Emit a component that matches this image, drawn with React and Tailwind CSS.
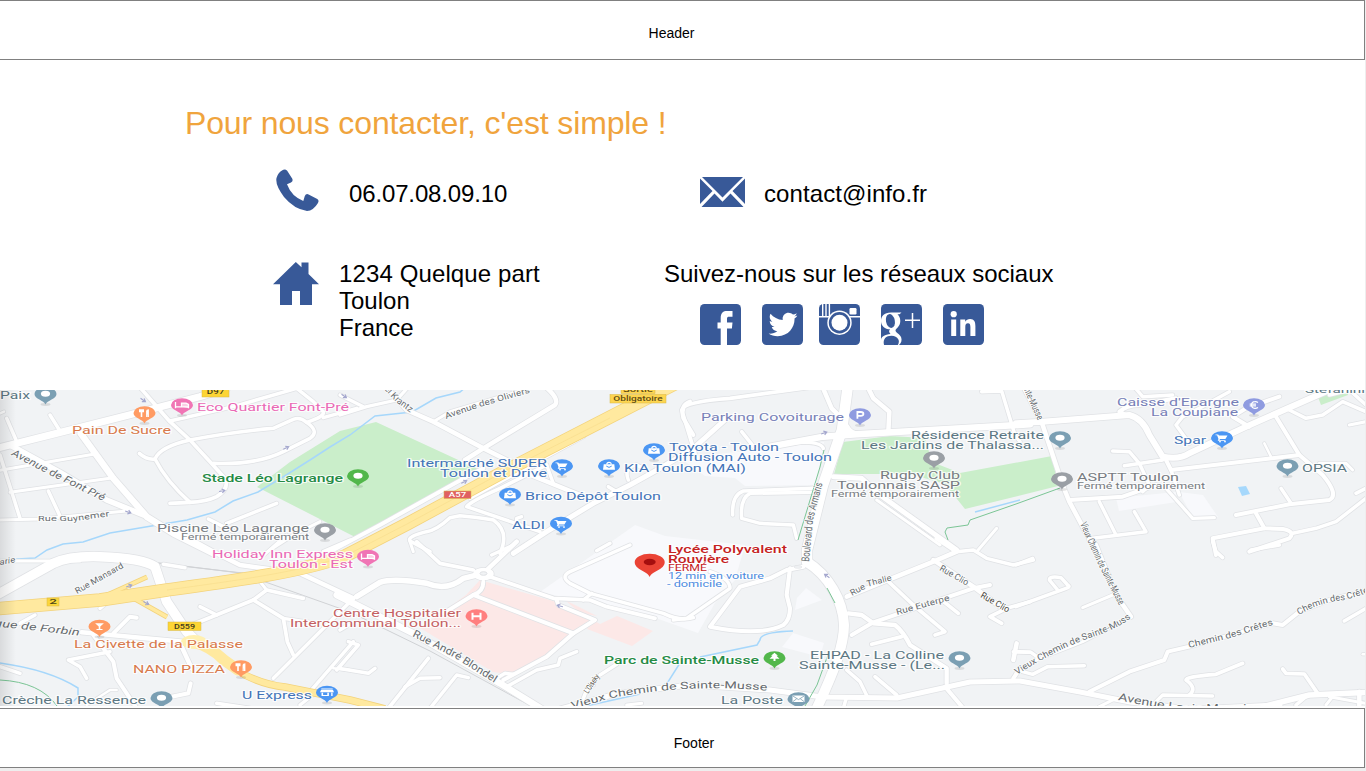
import React from "react";
import { FaTwitter } from "react-icons/fa";

const BLUE = "#385998";

/* Street geometry, grouped by map tile. Tile units are a third of a pixel; each street is [width in px, path]. */
const tiles = [
  { x: 0, y: 385, streets: [
    [6.5, "M-10 190L150 150L380 92L600 35L680 10"],
    [3, "M20 100L48 165"], [2, "M0 85L12 80"], [3, "M150 90L180 138"],
    [5, "M30 180L180 262L320 345L430 390"],
    [6, "M242 145L340 280L440 395L520 445L640 505"],
    [2.5, "M0 256L280 208"], [2.5, "M30 322L340 278"], [3, "M0 210L60 400"], [3, "M145 318L183 400"], [2.5, "M0 405L120 402L380 378"],
    [3.2, "M405 -10L510 110L570 165L630 230L675 280Q690 310 650 335Q620 350 570 352L510 355"],
    [3, "M418 205Q440 225 465 222Q500 290 570 352"],
    [3, "M465 222Q480 185 570 165Q700 140 820 130L880 103Q900 95 920 112Q960 140 930 160L850 200Q770 240 640 235"],
    [3, "M510 108L700 65L890 10"], [3, "M920 112Q975 95 970 80L940 50L890 10"], [3, "M970 98L1070 70"],
    [3, "M625 402L700 440"], [3, "M680 415L830 355"], [2.5, "M810 495L880 450L960 410"], [3, "M970 500L1050 465"],
  ]},
  { x: 340, y: 385, streets: [
    [4, "M135 0L200 75L280 110L430 190L500 225L560 265L720 330"],
    [2.5, "M280 110L330 80L600 0"], [4, "M610 0Q660 40 645 60L430 190L375 225"],
    [3.5, "M-30 500L120 420L380 275L430 250"], [2.8, "M0 90L80 65L170 45L210 0"], [2.8, "M0 30L70 65"],
    [3, "M730 155L500 280L390 340"], [3, "M600 440L380 365Q390 350 480 310L620 240"], [2.8, "M620 240L640 295"],
    [3, "M480 505Q510 440 460 405Q400 395 360 392L330 398Q290 435 260 440Q200 455 210 468L270 500"],
    [4.5, "M520 505L620 440L760 355L870 300L960 250L1060 190L1160 100"],
    [3, "M865 285Q850 245 890 240L910 250"], [3, "M805 305L830 320"], [3.5, "M1050 50Q1020 60 1030 100L1060 150"],
    [2.8, "M530 410L530 400L545 395"], [3, "M770 497L810 475"], [2.5, "M210 470L220 500"],
  ]},
  { x: 680, y: 385, streets: [
    [3.2, "M45 205L5 75Q10 50 150 40L440 0"], [3, "M185 140L225 190"], [4, "M425 0L455 70L480 95"],
    [4, "M560 0L580 40L628 80L625 140"], [3, "M905 20L965 18L1005 150L1020 170"],
    [6, "M270 185L430 155L530 148L1050 118"],
    [3, "M158 390Q155 330 190 318L400 310"], [3, "M400 322L210 325Q180 340 185 400L240 415L340 420L350 460"],
    [4.5, "M460 275L545 280L600 330L830 495"], [2.5, "M590 345L780 480"],
    [5, "M500 125Q510 148 540 148"], [3, "M280 180Q420 160 430 190"], [2.5, "M890 500L950 430"],
  ]},
  { x: 1016, y: 385, streets: [
    [5.5, "M0 115L80 110L340 90Q380 100 400 150L440 215Q490 225 520 205L690 125L940 15"],
    [4, "M20 0L80 120L140 300L160 350L240 500"],
    [3, "M290 198L340 200L370 235L400 300L380 320"], [3, "M325 242L440 225"], [3.5, "M445 215L465 255L850 210"],
    [3.5, "M330 90L310 80Q330 62 370 60L480 40"], [3, "M520 175L480 120L500 95L550 70L640 20"],
    [3.5, "M700 125L650 95L690 70L790 35"], [3.5, "M780 95L850 210L920 270Q970 330 940 345L820 358L660 390"],
    [2, "M745 175L765 215"], [3, "M820 75L870 100L920 90L980 50L1050 80"], [3, "M940 30L1000 15L1050 60"],
    [2.5, "M1000 120L1050 110"], [3, "M795 310L825 355"], [3.5, "M720 385L745 430L800 432Q840 440 820 460L700 500"],
    [3.5, "M745 430L590 460L600 510"], [3, "M830 445L900 430L960 410L1050 340"],
    [3.5, "M160 345L320 335L420 300"], [3, "M250 350L300 450"], [3, "M355 380L390 440L230 460"],
    [2.8, "M450 310L530 400L595 398"], [3, "M350 0L380 35L470 30"], [3, "M1020 325L1050 310"], [2.5, "M910 235L990 235L1010 255"], [3, "M465 255L490 330"],
  ]},
  { x: 0, y: 545, streets: [
    [9, "M-10 150L160 55Q210 32 300 35Q430 40 465 65L500 170L560 260L590 290"],
    [4, "M530 -40L640 20L720 60L900 85L1060 160"], [2.5, "M0 48L240 48"], [2.5, "M780 40L860 -30"], [3, "M490 58L555 68"],
    [3, "M600 185L650 210"], [3.2, "M575 240L760 165L800 135L910 160"], [2.5, "M780 110L800 135"],
    [3.2, "M760 165L850 220L862 290L880 330"], [2.8, "M850 220L950 235"], [3, "M820 400L1050 170"], [3, "M930 440L1060 290"],
    [3.5, "M340 265L390 215L410 218"], [4, "M245 262L550 290"], [3.5, "M280 270L340 350L350 400L410 490"],
    [3, "M330 320L205 345L240 365L260 400"], [4, "M545 305L575 370"], [3.5, "M515 455L565 445L572 415"],
    [3, "M0 365L60 385"], [3, "M60 235L105 210"], [2, "M350 435L330 435L260 480"], [2.8, "M900 480L950 440"], [3, "M300 190L330 165"], [3, "M650 475L750 490"],
    [2, "M1000 370L1050 375"],
  ]},
  { x: 340, y: 545, streets: [
    [5, "M50 155L120 112Q160 98 260 115Q320 140 370 100L430 85"], [3.2, "M230 -10L300 55L400 75"],
    [4, "M430 85L530 -10"], [3.2, "M450 95L640 160L750 165L800 185L945 220"],
    [3.5, "M430 110Q430 140 400 150L700 265"], [3.5, "M400 150L310 205"],
    [3.5, "M650 165L655 180L765 225L700 265L620 335L490 405"], [3, "M500 425L590 375L655 360L660 340L710 320"],
    [3, "M470 400L495 385L520 388"], [3, "M1060 218Q1020 230 970 205L750 145L690 115Q660 95 690 80L870 0"],
    [3, "M730 165L755 145"], [3, "M830 358L780 390"], [3, "M730 460L740 435L760 420"],
    [6, "M-10 150L220 265L480 415L610 495"], [3, "M25 290L55 300L-10 375"], [3, "M-5 370L85 385L105 370"],
    [3.2, "M265 340L145 490"], [3, "M300 398L240 400L195 425"], [3, "M385 398L350 390L270 490"], [2.8, "M455 30L520 0"],
    [3, "M0 255L25 240"], [2.5, "M860 480L905 475"],
  ]},
  { x: 680, y: 545, streets: [
    [4, "M500 155L760 50L830 20L770 -20"], [3, "M830 20L880 15L920 40L1000 60L1060 45"],
    [4, "M760 45L880 125L960 185"], [3.5, "M930 120L880 130L580 232L515 270"],
    [3.8, "M505 205L545 210L580 235L645 240Q670 260 690 300L800 370L800 415"],
    [3.2, "M615 100L700 180L795 260L765 270"], [3.2, "M785 165L835 205"], [3.2, "M575 298L665 275"],
    [3.2, "M1050 170L980 190L930 215L965 235"],
    [3.6, "M370 65L320 75L270 100L180 125L90 245Q240 275 310 240Q330 225 330 190L320 150L330 70"],
    [3, "M500 375L540 410L562 455"], [3.2, "M585 395L650 450"], [3.5, "M795 425L850 490"], [4, "M1010 295L1000 345"], [3, "M1000 320L1050 322"],
    [3, "M500 455L490 490"], [3, "M-20 225L20 220L150 130Q150 100 90 80"], [3.5, "M1000 400L1020 370"],
  ]},
  { x: 1016, y: 545, streets: [
    [3, "M0 185L150 130Q165 125 155 120L135 98Q100 92 100 105L125 135"], [3, "M0 60L50 40"], [2.5, "M200 188L290 150"],
    [3, "M590 -10L600 20L620 38"], [3, "M705 15L790 0"],
    [3.5, "M220 440L340 380L445 345L455 320L520 305L770 235L800 240L850 200L940 165L1060 135"],
    [3, "M20 380L50 388L95 365L205 362"], [3, "M0 320L45 322L70 340"], [2.8, "M420 470L440 450L590 453"],
    [3.2, "M520 450Q545 430 510 405Q510 395 600 388L680 355"], [3.2, "M800 372L810 385L865 387L905 445"],
    [5, "M720 490L880 450L1060 442"], [3, "M985 228L1050 190"], [4, "M1030 440L1030 485"], [2.5, "M250 485L300 460"],
    [3, "M840 480L870 455"], [2.5, "M940 455L1050 475"], [2.5, "M930 480L950 455"], [2, "M1040 328L1050 328"],
    [4, "M240 0L300 150L345 215"], [2.5, "M345 215L200 290L60 345L0 385"],
  ]},
];

/* Arterial roads in page pixels. */
const arterials = [
  [10, "M848 385L842 430L823 485L807 550L807 562"],
  [9.5, "M807 562C828 575 843 600 844 625C844 645 835 670 815 712"],
  [4.5, "M560 709L620 693L690 685L770 690L823 697L897 698L970 682L1020 681L1080 692L1130 702L1190 709L1280 705"],
];

const rivers = [
  "M480 375L460 392L436 398L412 412L375 416L350 435L330 447L310 460L283 477L258 492L233 501L215 512L187 520L110 533L83 542L63 544L47 550L35 558L0 560",
  "M0 663Q50 670 78 688L78 697L66 708", "M680 663L668 682L656 690", "M793 631Q760 632 760 640L757 645L700 657", "M975 512L1020 500", "M586 706L640 694",
];
const trails = ["M0 680Q40 682 57 706", "M1060 488L1016 504L970 520L968 525L947 528L945 532L948 540", "M824 450L820 467L798 540", "M827 588L835 603", "M829 652L817 685L805 706"];

const C = { orange: "#d8794b", blue: "#4374b8", gray: "#777b81", teal: "#5c7783", pink: "#ea68b5", green: "#258b45", violet: "#7780b8", red: "#c5221f", hosp: "#c46062", sky: "#4b8be0" };

/* [text, left, baseline, width, colour, size, weight] */
const places = [
  ["Paix", 0, 399, 30, C.teal, 10.2], ["Pain De Sucre", 72, 434, 99, C.orange, 10.2],
  ["Eco Quartier Font-Pré", 197, 411, 152, C.pink, 10.2], ["Stade Léo Lagrange", 202, 482, 141, C.green, 10.2, 500],
  ["Piscine Léo Lagrange", 157, 531.5, 152, C.gray, 10.2], ["Fermé temporairement", 181, 539.5, 128, C.gray, 8.2],
  ["Holiday Inn Express", 212, 557.5, 141, C.pink, 10.2], ["Toulon - Est", 269, 567.5, 84, C.pink, 10.2],
  ["Intermarché SUPER", 407, 467, 140, C.blue, 10.2], ["Toulon et Drive", 440, 476.5, 107, C.blue, 10.2],
  ["Brico Dépôt Toulon", 525, 500, 136, C.blue, 10.2], ["ALDI", 512, 529, 33, C.blue, 10.2],
  ["Toyota - Toulon", 669, 451, 110, C.blue, 10.2], ["Diffusion Auto - Toulon", 668, 460.5, 164, C.blue, 10.2],
  ["KIA Toulon (MAI)", 624, 472, 122, C.blue, 10.2], ["Parking Covoiturage", 701, 421, 143, C.violet, 10.2],
  ["Résidence Retraite", 911, 439, 133, C.teal, 10.2], ["Les Jardins de Thalassa...", 861, 448.5, 183, C.teal, 10.2],
  ["Rugby Club", 880, 479, 80, C.gray, 10.2], ["Toulonnais SASP", 837, 488.5, 123, C.gray, 10.2],
  ["Fermé temporairement", 831, 496.5, 128, C.gray, 8.2], ["Caisse d'Epargne", 1117, 406, 122, C.violet, 10.2],
  ["La Coupiane", 1151, 415.5, 87, C.violet, 10.2], ["Spar", 1174, 444, 32, C.blue, 10.2],
  ["OPSIA", 1302, 471.5, 45, C.teal, 10.2], ["ASPTT Toulon", 1077, 481, 102, C.gray, 10.2],
  ["Fermé temporairement", 1077, 488.5, 128, C.gray, 8.2], ["Stefanini", 1305, 392.5, 60, C.teal, 9],
  ["Lycée Polyvalent", 668, 552.5, 119, C.red, 10.2, 500], ["Rouvière", 668, 562.5, 61, C.red, 10.2, 500],
  ["FERMÉ", 668, 570.5, 39, C.red, 8.2], ["12 min en voiture", 668, 578.5, 96, C.sky, 8.5], ["- domicile", 667, 586.5, 55, C.sky, 8.5],
  ["Centre Hospitalier", 333, 616.5, 128, C.hosp, 10.2], ["Intercommunal Toulon...", 290, 626.5, 171, C.hosp, 10.2],
  ["La Civette de la Palasse", 74, 647.5, 169, C.orange, 10.2], ["NANO PIZZA", 133, 673, 92, C.orange, 10.2],
  ["U Express", 242, 698.5, 70, C.blue, 10.2], ["Crèche La Ressence", 2, 703.5, 144, C.teal, 10.2],
  ["Parc de Sainte-Musse", 604, 663.5, 155, C.green, 10.2, 500], ["La Poste", 721, 704, 62, C.teal, 10.2],
  ["EHPAD - La Colline", 810, 658.5, 134, C.teal, 10.2], ["Sainte-Musse -  (Le...", 799, 668.5, 146, C.teal, 10.2],
];

/* [text, path, size, slanted, colour] */
const streetNames = [
  ["Avenue de Font Pré", "M11 455L50 475L105 502", 10, true], ["Rue Guynemer", "M38 521L75 521L111 516", 8],
  ["Rue Mansard", "M77 594L100 581L125 567", 8.5], ["el Krantz", "M384 389L396 402L411 413", 9],
  ["Avenue des Oliviers", "M446 419L480 407L532 392", 8.5], ["arie", "M0 565L16 562", 8, true],
  ["que de Forbin", "M-6 626L30 630L81 636", 10, true], ["Rue André Blondel", "M412 636L455 658L496 684", 10.5],
  ["Vieux Chemin de Sainte-Musse", "M572 709L612 698Q690 683 770 691", 10],
  ["L'Oiseky", "M588 694L600 676", 8, false, "#4c4840"], ["Boulevard des Armaris", "M809 562L813 520L823 482", 11],
  ["Rue Thalie", "M852 596L870 586L893 580", 8.5], ["Rue Euterpe", "M897 615L951 600", 8.5],
  ["Rue Clio", "M939 570L967 586", 9], ["Rue Clio", "M980 597L1008 613", 9, false, "#4c4840"],
  ["nte-Musse", "M1024 390L1038 421", 9.5], ["Vieux Chemin de Sainte-Musse", "M1080 524L1097 562L1120 607", 10],
  ["Vieux Chemin de Sainte-Muss", "M1017 675Q1055 650 1090 638Q1120 628 1132 617", 9],
  ["Chemin des Crêtes", "M1189 648L1230 638L1275 624", 9], ["Chemin des Crêtes", "M1299 615Q1320 602 1345 600L1374 591", 9],
  ["Avenue Louis Monnier", "M1118 700Q1145 706 1190 712L1262 712", 10.5],
];

const pins = [
  [45.5, 394, "#7b9fb3", "dot"], [144.5, 413, "#ff9b63", "food"], [182, 405, "#f075b5", "bed"], [358, 476, "#52b74b", "dot"],
  [325, 530, "#9a9fa5", "dot"], [368, 556.5, "#f075b5", "bed"], [562, 466, "#4b96f3", "cart"], [609, 466, "#4b96f3", "bag"],
  [510, 494.5, "#4b96f3", "bag"], [561, 523.5, "#4b96f3", "cart"], [654, 450, "#4b96f3", "bag"], [860, 415, "#8f9be0", "P"],
  [934, 458, "#9a9fa5", "dot"], [1060, 438, "#7b9fb3", "dot"], [1062, 479, "#9a9fa5", "dot"], [1254, 405, "#8f9be0", "€"],
  [1222, 438, "#4b96f3", "cart"], [1287.5, 466, "#7b9fb3", "dot"], [99.5, 626.5, "#ff9b63", "drink"], [241, 667, "#ff9b63", "food"],
  [327, 692.5, "#4b96f3", "shop"], [161.5, 698, "#7b9fb3", "dot"], [476.5, 616, "#ff7f7f", "H"], [774.5, 658, "#52b74b", "tree"],
  [959.5, 658, "#7b9fb3", "dot"], [798.5, 699, "#7b9fb3", "mail"],
];

const shields = [
  ["D97", 202, 387, 27, 10, "#fdd534", "#3d3a20"], ["Obligatoire", 610, 394.5, 56, 8.5, "#fdd550", "#5d4c14"], ["Sortie", 621, 386, 34, 7.5, "#fdd550", "#5d4c14"],
  ["A57", 444, 491, 27, 7.5, "#e06062", "#fff"], ["2", 47, 598, 12, 8, "#fbd63b", "#4a4317"], ["D559", 168, 622, 33, 8.5, "#fdd534", "#3d3a20"],
];

const arrows = [[143, 400, 35], [286, 448, -25], [222, 491, -10], [128, 512, 20], [344, 396, 35], [824, 433, -20], [464, 482, -25], [560, 606, 195], [827, 576, 215], [129, 586, -20], [146, 603, 30]];

function Glyph({ kind }) {
  switch (kind) {
    case "dot": return <ellipse cx="0" cy="-.3" rx="4.6" ry="3" fill="#fff" />;
    case "food": return <path d="M-5.5-3.7h5v3h-1.7v4.6h-1.6v-4.6h-1.7zM1.6 3.9v-6q0-1.6 2.8-1.6v7.6H3v-2.4H2.8v2.4z" fill="#fff" />;
    case "bed": return <path d="M-6.5-3v6.2M-6.5 1.8H6.5M6.5 3.2V-.5L4-1.9H-.5V1.6" fill="#fff" fillOpacity=".65" stroke="#fff" strokeWidth="1.3" />;
    case "cart": return <g fill="#fff"><path d="M-6.5-3.6h2.7l.8 1.2h8.5L3.4 1.1h-5.3l-.7.8h6v.9h-7.7l.8-1.9-1.4-3.6h-1.6z" /><circle cx="-2" cy="3.6" r=".9" /><circle cx="3" cy="3.6" r=".9" /></g>;
    case "bag": return <g><path d="M-2.2-1.5q0-2.2 2.2-2.2t2.2 2.2" fill="none" stroke="#fff" strokeWidth="1.2" /><path d="M-5.3-1.8H5.3L6 3.8H-6z" fill="#fff" /><path d="M-2.7.1q2.7 2.6 5.4 0" fill="none" stroke="#4b96f3" strokeWidth="1" /></g>;
    case "shop": return <g fill="#fff"><path d="M-5.7-4h11.4v1h-11.4zM-6-2.5H6L7-.2H-7zM-5.5.2h1.6v2.2h4.2V.2h1.6v3.3h-7.4z" /><path d="M4.2 0h1.4v3.6H4.2z" /></g>;
    case "drink": return <path d="M-4.4-3.2H4.4L.8 0v2.6H3v.9H-3v-.9h2.2V0z" fill="#fff" />;
    case "tree": return <path d="M0-5.3 3.5-2.2H2L5 .8H1V3H-1V.8H-5L-2-2.2H-3.5z" fill="#fff" />;
    case "mail": return <g><path d="M-6-3.5H6V3H-6z" fill="#fff" /><path d="M-5.6-3 0 .6 5.6-3M-5.6 2.6-1.8-.2M5.6 2.6 1.8-.2" fill="none" stroke="#7b9fb3" strokeWidth=".8" /></g>;
    case "H": return <path d="M-4-3.2V3.7M4-3.2V3.7M-4 .2H4" stroke="#fff" strokeWidth="2" />;
    case "P": return <path d="M-2.6 3.7V-3H.8Q3.4-3 3.4-1.1T.8.8H-2.6" fill="none" stroke="#fff" strokeWidth="1.8" />;
    default: return <path d="M4-2.4Q2.5-3.5.8-3.3Q-2.5-3-2.5 0T.8 3.3Q2.5 3.4 4 2.4M-4.3-.8H2M-4.3.9H2" fill="none" stroke="#fff" strokeWidth="1.2" />;
  }
}

function Streets({ casing }) {
  const extra = casing ? 2 : 0.5;
  const color = casing ? "#e0e2e5" : "#ffffff";
  return (
    <g fill="none" stroke={color} strokeLinecap="round" strokeLinejoin="round">
      {tiles.map((t, i) => (
        <g key={i} transform={`translate(${t.x} ${t.y}) scale(0.33333)`}>
          {t.streets.map(([w, d], j) => <path key={j} d={d} strokeWidth={(w + extra) * 3} />)}
        </g>
      ))}
      {arterials.map(([w, d], i) => <path key={i} d={d} strokeWidth={w + extra} />)}
      <ellipse cx="483.5" cy="574" rx="9" ry="5" fill={color} strokeWidth={2 + extra} />
    </g>
  );
}

function pathLength(d) {
  const n = d.match(/-?[\d.]+/g).map(Number);
  let total = 0;
  for (let i = 2; i < n.length; i += 2) total += Math.hypot(n[i] - n[i - 2], n[i + 1] - n[i - 1]);
  return total;
}

function CityMap() {
  return (
    <svg className="block h-[316px] w-full font-['Roboto',sans-serif]" viewBox="0 390 1365 316" preserveAspectRatio="none">
      <defs>
        <linearGradient id="edge"><stop stopColor="#000" stopOpacity=".1" /><stop offset="1" stopColor="#000" stopOpacity="0" /></linearGradient>
      </defs>
      <rect x="0" y="390" width="1365" height="316" fill="#f1f3f5" />
      <g fill="#f8f9fc">
        <path d="M680 458L773 448L824 442L816 485L745 486L735 478L705 476Z" />
        <path d="M635 525L665 536L745 545L735 580L715 603L698 633L650 616L540 592Z" />
        <path d="M1116 498L1176 492L1176 502L1119 511ZM1179 492L1203 495L1218 517L1193 518Z" />
        <path d="M806 588L822 600L795 610L797 598ZM793 633L824 643L820 657L782 647Z" />
      </g>
      <g fill="#caeeca">
        <path d="M376 422L480 470L357 538L310 514L257 487L290 462L340 431Z" />
        <path d="M843 442L890 436L925 438L932 462L960 473L1052 456L1058 486L965 509L945 484L910 474L834 474Z" />
        <path d="M1318 397L1346 389L1348 395L1321 405Z" />
      </g>
      <path d="M480 580L560 603L595 620L572 635L548 658L515 675L493 672L420 628L466 595ZM593 620L600 624L617 616L653 631L632 646L587 629Z" fill="#fce8e7" />
      <path d="M500 676L510 677L504 683ZM565 600L597 616L580 613Z" fill="#fce8e7" />
      <path d="M1238 487L1246 486L1250 494L1242 496Z" fill="#a6d8fc" />
      <g fill="none" stroke="#a6d7fb" strokeWidth="1.5">{rivers.map((d, i) => <path key={i} d={d} />)}</g>
      <path d="M80 553L240 573L350 612L430 651L540 711M110 558L243 573" fill="none" stroke="#d0d2d5" strokeWidth="1" />
      <Streets casing />
      <Streets />
      <g fill="none" strokeLinejoin="round">
        <g stroke="#f3d37c">
          <path d="M690 376L507 470L407 524L345 556C300 572 240 580 167 590L100 600L-5 609" strokeWidth="13.5" />
          <path d="M105 596L147 577M135 599L167 617" strokeWidth="5" />
          <path d="M212 650L245 675Q265 685 285 687L350 700L385 709" strokeWidth="7.5" />
        </g>
        <g stroke="#ffe99f">
          <path d="M690 376L507 470L407 524L345 556C300 572 240 580 167 590L100 600L-5 609" strokeWidth="12" />
          <path d="M105 596L147 577M135 599L167 617" strokeWidth="3.5" />
          <path d="M212 650L245 675Q265 685 285 687L350 700L385 709" strokeWidth="6" />
          <path d="M192 642Q210 646 224 660L238 670" strokeWidth="11" strokeLinecap="round" />
        </g>
        <path d="M610 418L507 470L407 524L345 556C300 572 240 580 167 590" stroke="#f6dc8c" strokeWidth=".6" />
      </g>
      <ellipse cx="194" cy="642" rx="13" ry="7" fill="#fff0b0" />
      <ellipse cx="483.5" cy="573.5" rx="3.5" ry="1.8" fill="#f1f3f5" stroke="#dfe1e4" />
      <ellipse cx="798" cy="567" rx="4" ry="1.3" fill="#f1f3f5" stroke="#dfe1e4" strokeWidth=".6" />
      <g fill="none" stroke="#7bc595" strokeWidth="1">{trails.map((d, i) => <path key={i} d={d} />)}</g>
      <g fill="none" stroke="#a4a7ce" strokeWidth="1.1">
        {arrows.map(([x, y, r], i) => <path key={i} transform={`translate(${x} ${y}) rotate(${r})`} d="M-3 0H3M0-2L3 0L0 2" />)}
      </g>
      <g stroke="#fbfcfc" strokeWidth="2" strokeOpacity=".85" paintOrder="stroke" strokeLinejoin="round">
        {streetNames.map(([text, d, size, slanted, color], i) => (
          <g key={i}>
            <path id={`street-${i}`} d={d} fill="none" stroke="none" />
            <text fontSize={size} fill={color || "#666b6f"} fontStyle={slanted ? "italic" : "normal"}>
              <textPath href={`#street-${i}`} textLength={pathLength(d) * 0.98} lengthAdjust="spacingAndGlyphs">{text}</textPath>
            </text>
          </g>
        ))}
      </g>
      {shields.map(([text, x, y, w, h, bg, fg], i) => (
        <g key={i}>
          <rect x={x} y={y} width={w} height={h} fill={bg} stroke="#d8b748" strokeWidth=".5" />
          <text x={x + w * (text.length > 4 ? 0.06 : 0.18)} y={y + h / 2 + 2.3} fill={fg} fontSize="6.8" fontWeight="500" textLength={w * (text.length > 4 ? 0.88 : 0.64)} lengthAdjust="spacingAndGlyphs">{text}</text>
        </g>
      ))}
      {pins.map(([x, y, color, kind], i) => (
        <g key={i} transform={`translate(${x} ${y})`}>
          <ellipse cx="0" cy="10.5" rx="5" ry="1.4" fill="#000" opacity=".1" />
          <path d="M0 10.5C-1.5 6.2-11 5.2-11 0A11 6.8 0 0 1 11 0C11 5.2 1.5 6.2 0 10.5Z" fill={color} />
          <Glyph kind={kind} />
        </g>
      ))}
      <g transform="translate(649.7 562)">
        <path d="M0 15C-2 9-15 8-15 0A15 8.3 0 0 1 15 0C15 8 2 9 0 15Z" fill="#ea4335" />
        <ellipse rx="6" ry="3.2" fill="#a50e0e" />
      </g>
      <g stroke="#fff" strokeWidth="2" strokeOpacity=".8" paintOrder="stroke" strokeLinejoin="round">
        {places.map(([text, x, y, w, color, size, weight], i) => (
          <text key={i} x={x} y={y} fill={color} fontSize={size} fontWeight={weight || 400} textLength={w} lengthAdjust="spacingAndGlyphs">{text}</text>
        ))}
      </g>
      <rect x="0" y="390" width="16" height="316" fill="url(#edge)" />
    </svg>
  );
}

function SocialTile({ children }) {
  return (
    <svg className="size-[41px] shrink-0" viewBox="0 0 41 41">
      <rect width="41" height="41" rx="4.5" fill={BLUE} />
      {children}
    </svg>
  );
}

function SocialLinks() {
  return (
    <div className="ml-9 mt-[17px] flex">
      <SocialTile><path d="M20.7 41V24.5H17.5V18.5H20.7V14C20.7 8.8 23.3 7 27 7H32.5V12.8H29.2C27.5 12.8 27 13.4 27 15V18.5H32.5L31.9 24.5H27V41Z" fill="#fff" /></SocialTile>
      <div className="ml-[21px] flex">
        <SocialTile><FaTwitter x="6.5" y="6" size="29" color="#fff" /></SocialTile>
      </div>
      <div className="ml-4 flex">
        <SocialTile>
          <path d="M3.7 0V12M7 0V12M10.4 0V12M0 12.7H41" stroke="#fff" strokeWidth="1.4" />
          <rect x="30.5" y="4" width="7" height="6.5" rx="1.2" fill="#fff" />
          <circle cx="20.5" cy="18.7" r="12.2" fill="#fff" /><circle cx="20.5" cy="18.7" r="10.7" fill={BLUE} /><circle cx="20.5" cy="18.7" r="8" fill="#fff" />
        </SocialTile>
      </div>
      <div className="ml-[21px] flex">
        <SocialTile>
          <path d="M20.5 8.5H10C3 8.5 0 12.5 0 17C0 22 4 25.3 9 25.3C7.5 27 8 28.5 9.5 30C4 30.5 0 32.5 0 36V41H18C20.5 39 21 36 20.2 33.5C19 30 14.5 28.5 14.5 26.5C14.5 24.5 19.3 23 19.3 17C19.3 14 18 11.5 16.5 10.3H18.5Z" fill="#fff" />
          <ellipse cx="9.4" cy="17" rx="4.4" ry="7" transform="rotate(-12 9.4 17)" fill={BLUE} />
          <path d="M3 41C1.5 35 5 31.8 10.5 31.8C17 32 19.5 37 16.8 41Z" fill={BLUE} />
          <path d="M24 16.2H39M31.5 9V24" stroke="#fff" strokeWidth="1.5" />
        </SocialTile>
      </div>
      <div className="ml-[21px] flex">
        <SocialTile>
          <circle cx="10.7" cy="10.2" r="3.1" fill="#fff" />
          <path d="M8.2 15.5H13.2V32H8.2ZM17.3 15.5H22.2V17.7C23.3 16.1 24.8 15.1 27.1 15.1C31.3 15.1 32.4 18.2 32.4 22.3V32H27.4V23.3C27.4 20.8 27 19.2 25 19.2C22.8 19.2 22.3 20.8 22.3 23.2V32H17.3Z" fill="#fff" />
        </SocialTile>
      </div>
    </div>
  );
}

export default function App() {
  return (
    <div className="flex h-[771px] w-[1366px] flex-col overflow-hidden bg-[#eeeeee] font-['Liberation_Sans',Arial,sans-serif] text-black">
      <div className="flex h-[768px] w-[1365px] flex-col bg-white">
        <header className="flex h-[60px] shrink-0 items-center justify-center border border-l-0 border-[#808080] pr-[21px] pt-1.5 text-sm leading-5">Header</header>
        <main className="h-[330px] shrink-0 pt-[43px]">
          <h1 className="ml-[185px] h-10 text-[32px] leading-10 tracking-[-0.14px] text-[#f0a43d]">Pour nous contacter, c'est simple !</h1>
          <div className="mt-[26px] flex h-[45px]">
            <div className="flex w-[664px] pl-[276px]">
              <svg className="h-[43px] w-[43px] shrink-0" viewBox="0 0 43 43">
                <path d="M6 1.5Q9-.6 11.2 1.8L16.3 9.8Q17.3 12.3 15 13.6L11 15.3Q15.5 27.5 27.3 31.9L28.8 27Q30 24.3 32.6 25.4L41.3 30Q43.5 31.6 41.8 34.2Q37.5 41.5 31 42Q18 40 8 28Q-1 16 .5 9Q2 3.5 6 1.5Z" fill={BLUE} />
              </svg>
              <p className="ml-[30px] mt-[9px] text-2xl leading-8 tracking-[-0.14px]">06.07.08.09.10</p>
            </div>
            <div className="flex pl-9">
              <svg className="mt-2 h-[30px] w-[45px] shrink-0" viewBox="0 0 45 30">
                <path d="M2 0H43L22.5 20.5ZM0 1.5L12.5 14L0 27ZM45 1.5V27L32.5 14ZM1.5 30L14.5 16.5L22.5 24.8L30.5 16.5L43.5 30Z" fill={BLUE} />
              </svg>
              <p className="ml-[19px] mt-[9px] text-2xl leading-8 tracking-[0.09px]">contact@info.fr</p>
            </div>
          </div>
          <div className="mt-[46px] flex">
            <div className="flex w-[664px] pl-[273px]">
              <svg className="mt-0.5 h-[43px] w-[46px] shrink-0" viewBox="0 0 46 43">
                <path d="M22.8 0L28.5 5.3V.5H35.5V12L46 22.3H39V43H27V29H19V43H7V22.3H0Z" fill={BLUE} />
              </svg>
              <address className="ml-5 text-2xl leading-[27px] not-italic"><span className="tracking-[0.12px]">1234 Quelque part</span><br />Toulon<br />France</address>
            </div>
            <div>
              <p className="text-2xl leading-[27px]">Suivez-nous sur les réseaux sociaux</p>
              <SocialLinks />
            </div>
          </div>
        </main>
        <CityMap />
        <footer className="mt-0.5 flex h-[60px] shrink-0 items-center justify-center border border-l-0 border-[#808080] pl-6 pt-2.5 text-sm leading-5">Footer</footer>
      </div>
    </div>
  );
}
